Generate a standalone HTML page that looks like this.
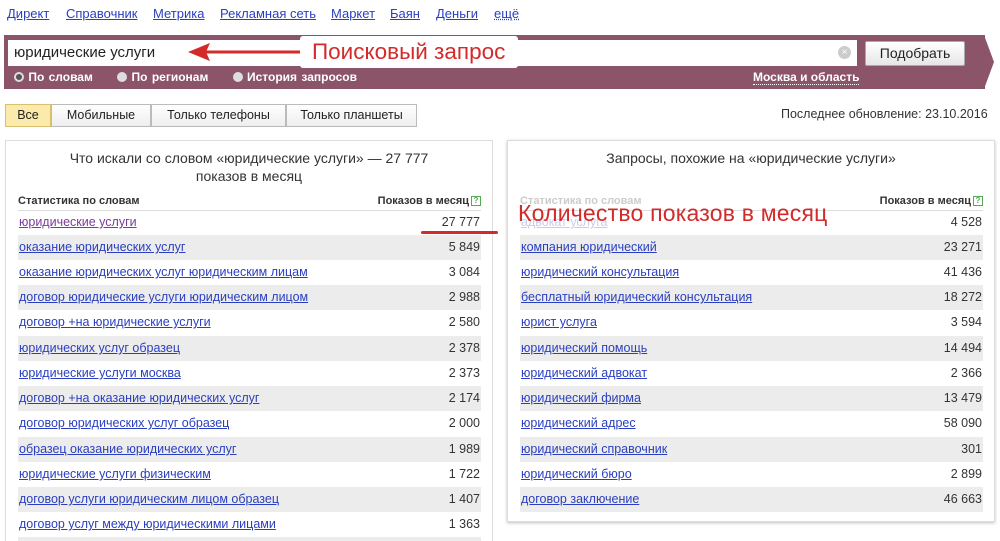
<!DOCTYPE html><html><head><meta charset="utf-8"><style>
*{margin:0;padding:0;box-sizing:border-box}
html,body{width:1000px;height:541px;overflow:hidden}
body{background:#fff;font-family:"Liberation Sans",sans-serif;position:relative;color:#333}
.a{position:absolute}
.top a{position:absolute;top:6px;font-size:13px;color:#2a3fc0;text-decoration:underline;white-space:nowrap}
.panel{position:absolute;top:140px;border:1px solid #ddd;background:#fff;overflow:hidden}
.row{position:absolute;left:12px;height:25px;font-size:12.5px;line-height:25px}
.row a{color:#2a3fc0;text-decoration:underline;position:absolute;left:1px}
.row span{position:absolute;right:1px;color:#333}
.g{background:#ececec}
.hd{position:absolute;left:12px;top:54px;height:16px;border-bottom:1px solid #ddd;font-size:11px;font-weight:bold;color:#333}
.q{display:inline-block;width:10px;height:10px;border:1px solid #5a5;color:#5a5;font-size:8px;line-height:8px;text-align:center;vertical-align:1px;margin-left:2px}
.tab{position:absolute;top:104px;height:23px;border:1px solid #bbb;background:linear-gradient(#fff,#eee);font-size:12.5px;line-height:21px;text-align:center;color:#222}
</style></head><body>
<div class="top">
<a style="left:7px">Директ</a><a style="left:66px">Справочник</a><a style="left:153px">Метрика</a><a style="left:220px">Рекламная сеть</a><a style="left:331px">Маркет</a><a style="left:390px">Баян</a><a style="left:436px">Деньги</a><a style="left:494px;text-decoration:underline dotted">ещё</a>
</div>
<div class="a" style="left:4px;top:35px;width:981px;height:54px;background:#8b5469"></div>
<svg class="a" style="left:984px;top:35px" width="14" height="54"><polygon points="0,0 10,27 0,54" fill="#8b5469"/></svg>
<div class="a" style="left:8px;top:40px;width:849px;height:26px;background:#fff;font-size:15px;line-height:26px;padding-left:6px;color:#222">юридические услуги</div>
<div class="a" style="left:838px;top:46px;width:13px;height:13px;border-radius:50%;background:#ccc;color:#fff;font-size:10px;line-height:13px;text-align:center">×</div>
<div class="a" style="left:865px;top:41px;width:100px;height:25px;background:linear-gradient(#fff,#e6e6e6);border:1px solid #aaa;border-radius:2px;font-size:14px;line-height:23px;text-align:center;color:#222">Подобрать</div>
<div class="a" style="left:14px;top:70px;font-size:12px;font-weight:bold;color:#fff;line-height:14px;word-spacing:1px">
<span style="display:inline-block;width:10px;height:10px;border-radius:50%;border:2px solid #ddd;background:#555;vertical-align:-1px"></span>&nbsp;По словам
<span style="display:inline-block;width:10px;height:10px;border-radius:50%;background:#ddd;margin-left:20px;vertical-align:-1px"></span>&nbsp;По регионам
<span style="display:inline-block;width:10px;height:10px;border-radius:50%;background:#ddd;margin-left:20px;vertical-align:-1px"></span>&nbsp;История запросов</div>
<div class="a" style="left:753px;top:70px;font-size:12px;font-weight:bold;color:#fff;border-bottom:1px dotted #fff;line-height:14px">Москва и область</div>
<div class="a" style="left:300px;top:36px;width:218px;height:32px;background:#fff;border-radius:3px"></div>
<div class="a" style="left:312px;top:38px;font-size:22.5px;color:#d42a2a;line-height:28px">Поисковый запрос</div>
<svg class="a" style="left:180px;top:40px" width="122" height="24"><line x1="22" y1="12" x2="120" y2="12" stroke="#d42a2a" stroke-width="3"/><polygon points="8,12 30,3 26,12 30,21" fill="#d42a2a"/></svg>
<div class="tab" style="left:5px;width:46px;background:#fbeaa9;border-color:#d8c070">Все</div>
<div class="tab" style="left:51px;width:100px">Мобильные</div>
<div class="tab" style="left:151px;width:135px">Только телефоны</div>
<div class="tab" style="left:286px;width:131px">Только планшеты</div>
<div class="a" style="left:781px;top:107px;font-size:12.5px;color:#333">Последнее обновление: 23.10.2016</div>

<div class="panel" style="left:5px;width:488px;height:401px;border-bottom:none">
<div class="a" style="left:0;width:486px;top:8px;text-align:center;font-size:14px;line-height:18px;color:#333">Что искали со словом «юридические услуги» — 27 777<br>показов в месяц</div>
<div class="hd" style="width:463px"><span>Статистика по словам</span><span style="position:absolute;right:0">Показов в месяц<span class="q">?</span></span></div>
<div class="row" style="top:69px;width:463px"><a style="color:#7a3c9a">юридические услуги</a><span>27 777</span></div>
<div class="row g" style="top:94px;width:463px"><a>оказание юридических услуг</a><span>5 849</span></div>
<div class="row" style="top:119px;width:463px"><a>оказание юридических услуг юридическим лицам</a><span>3 084</span></div>
<div class="row g" style="top:144px;width:463px"><a>договор юридические услуги юридическим лицом</a><span>2 988</span></div>
<div class="row" style="top:169px;width:463px"><a>договор +на юридические услуги</a><span>2 580</span></div>
<div class="row g" style="top:195px;width:463px"><a>юридических услуг образец</a><span>2 378</span></div>
<div class="row" style="top:220px;width:463px"><a>юридические услуги москва</a><span>2 373</span></div>
<div class="row g" style="top:245px;width:463px"><a>договор +на оказание юридических услуг</a><span>2 174</span></div>
<div class="row" style="top:270px;width:463px"><a>договор юридических услуг образец</a><span>2 000</span></div>
<div class="row g" style="top:296px;width:463px"><a>образец оказание юридических услуг</a><span>1 989</span></div>
<div class="row" style="top:321px;width:463px"><a>юридические услуги физическим</a><span>1 722</span></div>
<div class="row g" style="top:346px;width:463px"><a>договор услуги юридическим лицом образец</a><span>1 407</span></div>
<div class="row" style="top:371px;width:463px"><a>договор услуг между юридическими лицами</a><span>1 363</span></div>
<div class="row g" style="top:396px;width:463px"></div>
</div>
<div class="a" style="left:421px;top:231px;width:77px;height:3px;background:#d42a2a;border-radius:2px"></div>

<div class="panel" style="left:507px;width:488px;height:382px;box-shadow:0 1px 3px rgba(0,0,0,.25)">
<div class="a" style="left:0;width:486px;top:8px;text-align:center;font-size:14px;line-height:18px;color:#333">Запросы, похожие на «юридические услуги»</div>
<div class="hd" style="width:463px"><span style="color:#ccc">Статистика по словам</span><span style="position:absolute;right:0">Показов в месяц<span class="q">?</span></span></div>
<div class="row" style="top:69px;width:463px"><a style="color:#c8cde8">адвокат услуга</a><span>4 528</span></div>
<div class="row g" style="top:94px;width:463px"><a>компания юридический</a><span>23 271</span></div>
<div class="row" style="top:119px;width:463px"><a>юридический консультация</a><span>41 436</span></div>
<div class="row g" style="top:144px;width:463px"><a>бесплатный юридический консультация</a><span>18 272</span></div>
<div class="row" style="top:169px;width:463px"><a>юрист услуга</a><span>3 594</span></div>
<div class="row g" style="top:195px;width:463px"><a>юридический помощь</a><span>14 494</span></div>
<div class="row" style="top:220px;width:463px"><a>юридический адвокат</a><span>2 366</span></div>
<div class="row g" style="top:245px;width:463px"><a>юридический фирма</a><span>13 479</span></div>
<div class="row" style="top:270px;width:463px"><a>юридический адрес</a><span>58 090</span></div>
<div class="row g" style="top:296px;width:463px"><a>юридический справочник</a><span>301</span></div>
<div class="row" style="top:321px;width:463px"><a>юридический бюро</a><span>2 899</span></div>
<div class="row g" style="top:346px;width:463px"><a>договор заключение</a><span>46 663</span></div>
</div>
<div class="a" style="left:518px;top:198px;font-size:23px;color:#d42a2a;line-height:30px;white-space:nowrap;letter-spacing:0.2px">Количество показов в месяц</div>
</body></html>
